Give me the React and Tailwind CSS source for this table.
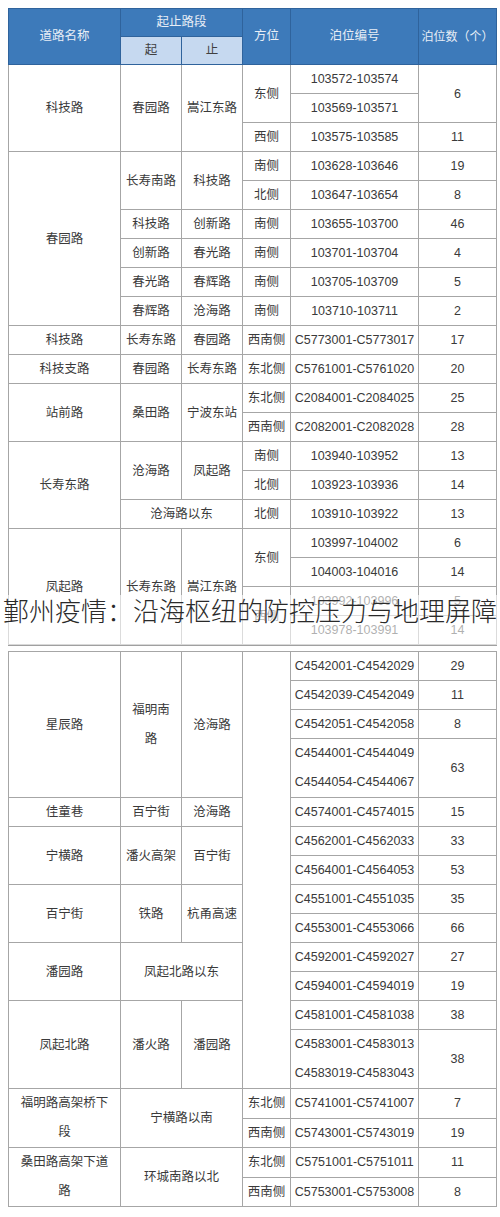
import React from "react";

// cell: [text, rowSpan, colSpan]
const top = [
  [["科技路", 3], ["春园路", 3], ["嵩江东路", 3], ["东侧", 2], ["103572-103574"], ["6", 2]],
  [["103569-103571"]],
  [["西侧"], ["103575-103585"], ["11"]],
  [["春园路", 6], ["长寿南路", 2], ["科技路", 2], ["南侧"], ["103628-103646"], ["19"]],
  [["北侧"], ["103647-103654"], ["8"]],
  [["科技路"], ["创新路"], ["南侧"], ["103655-103700"], ["46"]],
  [["创新路"], ["春光路"], ["南侧"], ["103701-103704"], ["4"]],
  [["春光路"], ["春辉路"], ["南侧"], ["103705-103709"], ["5"]],
  [["春辉路"], ["沧海路"], ["南侧"], ["103710-103711"], ["2"]],
  [["科技路"], ["长寿东路"], ["春园路"], ["西南侧"], ["C5773001-C5773017"], ["17"]],
  [["科技支路"], ["春园路"], ["长寿东路"], ["东北侧"], ["C5761001-C5761020"], ["20"]],
  [["站前路", 2], ["桑田路", 2], ["宁波东站", 2], ["东北侧"], ["C2084001-C2084025"], ["25"]],
  [["西南侧"], ["C2082001-C2082028"], ["28"]],
  [["长寿东路", 3], ["沧海路", 2], ["凤起路", 2], ["南侧"], ["103940-103952"], ["13"]],
  [["北侧"], ["103923-103936"], ["14"]],
  [["沧海路以东", 1, 2], ["北侧"], ["103910-103922"], ["13"]],
  [["凤起路", 4], ["长寿东路", 4], ["嵩江东路", 4], ["东侧", 2], ["103997-104002"], ["6"]],
  [["104003-104016"], ["14"]],
  [["西侧", 2], ["103992-103996"], ["5"]],
  [["103978-103991"], ["14"]],
];

const bottom = [
  [["星辰路", 5], [["福明南", "路"], 5], ["沧海路", 5], ["", 15], ["C4542001-C4542029"], ["29"]],
  [["C4542039-C4542049"], ["11"]],
  [["C4542051-C4542058"], ["8"]],
  [[["C4544001-C4544049", "C4544054-C4544067"], 2], ["63", 2]],
  [],
  [["佳童巷"], ["百宁街"], ["沧海路"], ["C4574001-C4574015"], ["15"]],
  [["宁横路", 2], ["潘火高架", 2], ["百宁街", 2], ["C4562001-C4562033"], ["33"]],
  [["C4564001-C4564053"], ["53"]],
  [["百宁街", 2], ["铁路", 2], ["杭甬高速", 2], ["C4551001-C4551035"], ["35"]],
  [["C4553001-C4553066"], ["66"]],
  [["潘园路", 2], ["凤起北路以东", 2, 2], ["C4592001-C4592027"], ["27"]],
  [["C4594001-C4594019"], ["19"]],
  [["凤起北路", 3], ["潘火路", 3], ["潘园路", 3], ["C4581001-C4581038"], ["38"]],
  [[["C4583001-C4583013", "C4583019-C4583043"], 2], ["38", 2]],
  [],
  [[["福明路高架桥下", "段"], 2], ["宁横路以南", 2, 2], ["东北侧"], ["C5741001-C5741007"], ["7"]],
  [["西南侧"], ["C5743001-C5743019"], ["19"]],
  [[["桑田路高架下道", "路"], 2], ["环城南路以北", 2, 2], ["东北侧"], ["C5751001-C5751011"], ["11"]],
  [["西南侧"], ["C5753001-C5753008"], ["8"]],
];

function Cols() {
  return (
    <colgroup>
      <col className="w-[112px]" />
      <col className="w-[61px]" />
      <col className="w-[61px]" />
      <col className="w-[48px]" />
      <col className="w-[128px]" />
      <col className="w-[78px]" />
    </colgroup>
  );
}

function Body({ rows }) {
  return (
    <tbody>
      {rows.map((row, i) => (
        <tr key={i} className="h-[28px]">
          {row.map(([t, rs = 1, cs = 1], j) => (
            <td
              key={j}
              rowSpan={rs}
              colSpan={cs}
              className="border border-[#a6a6a6] p-0 h-[28px] leading-[28px] text-center align-middle whitespace-nowrap"
            >
              {Array.isArray(t) ? t.map((l, k) => <div key={k} className="leading-[29px]">{l}</div>) : t}
            </td>
          ))}
        </tr>
      ))}
    </tbody>
  );
}

export default function App() {
  return (
    <div
      className="relative w-[500px] h-[1217px] bg-white pt-2 pl-2 text-[12.5px] text-[#3a3a3a]"
      style={{ fontFamily: '"Liberation Sans", "Noto Sans CJK SC", sans-serif' }}
    >
      <table className="w-[488px] table-fixed border-collapse border-b-2 border-[#a0a0a0]">
        <Cols />
        <thead className="text-[#e8eef6] font-light">
          <tr className="h-[28px]">
            <th rowSpan={2} className="border border-[#2f639c] bg-[#3d7aba] font-normal p-0">道路名称</th>
            <th colSpan={2} className="border border-[#2f639c] bg-[#3d7aba] font-normal p-0 h-[28px]">起止路段</th>
            <th rowSpan={2} className="border border-[#2f639c] bg-[#3d7aba] font-normal p-0">方位</th>
            <th rowSpan={2} className="border border-[#2f639c] bg-[#3d7aba] font-normal p-0">泊位编号</th>
            <th rowSpan={2} className="border border-[#2f639c] bg-[#3d7aba] font-normal p-0 text-[12px] whitespace-nowrap">泊位数（个）</th>
          </tr>
          <tr className="h-[28px]">
            <th className="border border-[#2f639c] bg-[#c6d9f0] text-[#404040] font-normal p-0 h-[28px]">起</th>
            <th className="border border-[#2f639c] bg-[#c6d9f0] text-[#404040] font-normal p-0 h-[28px]">止</th>
          </tr>
        </thead>
        <Body rows={top} />
      </table>

      <table className="mt-[5px] w-[488px] table-fixed border-collapse">
        <Cols />
        <Body rows={bottom} />
      </table>

      {/* caption laid over the table */}
      <div className="absolute left-0 right-0 top-[595px] h-[50px] bg-white/60 flex items-start justify-center pt-[2px]">
        <span
          className="text-[26px] leading-[26px] font-light text-[#2a2a2a] whitespace-nowrap"
          style={{ fontFamily: '"Noto Sans CJK SC", sans-serif' }}
        >
          鄞州疫情：沿海枢纽的防控压力与地理屏障
        </span>
      </div>
    </div>
  );
}
